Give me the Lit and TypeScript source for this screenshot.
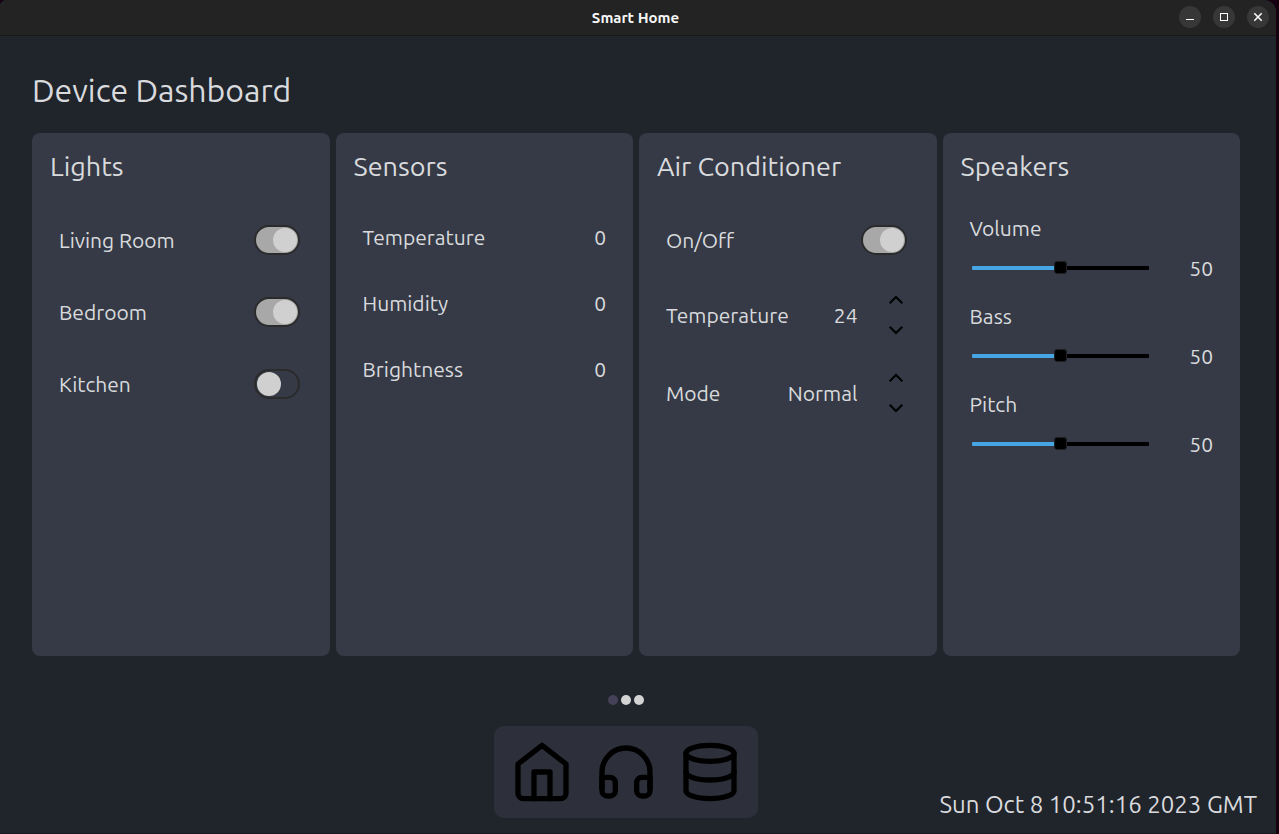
import { LitElement, html, svg, css } from "lit";
import { customElement, property, state } from "lit/decorators.js";

const ICONS = {
  home: svg`<path d="M3 9l9-7 9 7v11a2 2 0 0 1-2 2H5a2 2 0 0 1-2-2z"/><polyline points="9 22 9 12 15 12 15 22"/>`,
  headphones: svg`<path d="M3 18v-6a9 9 0 0 1 18 0v6"/><path d="M21 19a2 2 0 0 1-2 2h-1a2 2 0 0 1-2-2v-3a2 2 0 0 1 2-2h3zM3 19a2 2 0 0 0 2 2h1a2 2 0 0 0 2-2v-3a2 2 0 0 0-2-2H3z"/>`,
  database: svg`<ellipse cx="12" cy="5" rx="9" ry="3"/><path d="M21 12c0 1.66-4 3-9 3s-9-1.34-9-3"/><path d="M3 5v14c0 1.66 4 3 9 3s9-1.34 9-3V5"/>`,
};

@customElement("device-card")
class DeviceCard extends LitElement {
  @property() heading = "";

  static styles = css`
    :host {
      display: block;
      background: #353a46;
      border-radius: 8px;
      padding: 14px 18px;
    }
    .heading {
      margin: 0 0 19px;
      font-size: 27px;
      font-weight: 400;
      line-height: 38px;
      white-space: nowrap;
    }
    .body {
      padding: 0 9px;
    }
  `;

  render() {
    return html`<h2 class="heading">${this.heading}</h2>
      <div class="body"><slot></slot></div>`;
  }
}

@customElement("toggle-row")
class ToggleRow extends LitElement {
  @property() label = "";
  @property({ type: Boolean }) on = false;

  static styles = css`
    .row {
      display: flex;
      align-items: center;
      justify-content: space-between;
      height: 72px;
    }
    .switch {
      appearance: none;
      box-sizing: border-box;
      display: flex;
      align-items: center;
      width: 46px;
      height: 30px;
      margin: 0 3px 0 0;
      padding: 0 1px;
      border: 2px solid #2b2b2b;
      border-radius: 15px;
      background: transparent;
    }
    .switch::before {
      content: "";
      width: 24px;
      height: 24px;
      border-radius: 50%;
      background: #d0d0d0;
    }
    .switch:checked {
      justify-content: flex-end;
      background: #a8a8a8;
    }
  `;

  render() {
    return html`<label class="row">
      <span>${this.label}</span>
      <input
        class="switch"
        type="checkbox"
        role="switch"
        .checked=${this.on}
        @change=${(e: Event) => (this.on = (e.target as HTMLInputElement).checked)}
      />
    </label>`;
  }
}

@customElement("sensor-row")
class SensorRow extends LitElement {
  @property() label = "";
  @property({ type: Number }) value = 0;

  static styles = css`
    .row {
      display: flex;
      align-items: center;
      justify-content: space-between;
      height: 66px;
    }
  `;

  render() {
    return html`<div class="row"><span>${this.label}</span><output>${this.value}</output></div>`;
  }
}

@customElement("stepper-row")
class StepperRow extends LitElement {
  @property() label = "";
  @property({ type: Array }) options: string[] = [];
  @property({ type: Number }) index = 0;

  static styles = css`
    .row {
      display: flex;
      align-items: center;
      height: 78px;
    }
    .value {
      margin-left: auto;
      margin-right: 24px;
    }
    .stepper {
      display: flex;
      flex-direction: column;
    }
    .step {
      display: grid;
      place-items: center;
      width: 28px;
      height: 30px;
      padding: 0;
      border: 0;
      background: none;
      color: #000;
    }
    .chevron {
      width: 16px;
      height: 10px;
      fill: none;
      stroke: currentColor;
      stroke-width: 2;
    }
  `;

  private move(by: number) {
    this.index = Math.min(this.options.length - 1, Math.max(0, this.index + by));
  }

  render() {
    return html`<div class="row">
      <span>${this.label}</span>
      <output class="value">${this.options[this.index]}</output>
      <div class="stepper">
        <button class="step" aria-label="${this.label} up" @click=${() => this.move(1)}>
          <svg class="chevron" viewBox="0 0 16 10"><path d="M1.7 8.3L8 2l6.3 6.3" /></svg>
        </button>
        <button class="step" aria-label="${this.label} down" @click=${() => this.move(-1)}>
          <svg class="chevron" viewBox="0 0 16 10"><path d="M1.7 1.7L8 8l6.3-6.3" /></svg>
        </button>
      </div>
    </div>`;
  }
}

@customElement("slider-row")
class SliderRow extends LitElement {
  @property() label = "";
  @property({ type: Number }) value = 50;

  static styles = css`
    .group {
      padding: 10px 0;
    }
    .label {
      display: block;
      line-height: 28px;
      margin-bottom: 12px;
    }
    .row {
      display: flex;
      align-items: center;
      line-height: 28px;
    }
    .slider {
      appearance: none;
      flex: 1;
      min-width: 0;
      height: 13px;
      margin: 0 0 0 2px;
      background: none;
    }
    .slider::-webkit-slider-runnable-track {
      height: 4px;
      border-radius: 1px;
      background: linear-gradient(to right, #46a5e5 var(--fill), #000 var(--fill));
    }
    .slider::-webkit-slider-thumb {
      appearance: none;
      box-sizing: border-box;
      width: 13px;
      height: 13px;
      margin-top: -5px;
      border: 1px solid #1d1f23;
      border-radius: 3px;
      background: #000;
    }
    .value {
      width: 64px;
      text-align: right;
    }
  `;

  render() {
    return html`<div class="group">
      <label class="label" for="level">${this.label}</label>
      <div class="row">
        <input
          id="level"
          class="slider"
          type="range"
          min="0"
          max="100"
          style="--fill: ${this.value}%"
          .value=${String(this.value)}
          @input=${(e: Event) => (this.value = Number((e.target as HTMLInputElement).value))}
        />
        <output class="value" for="level">${this.value}</output>
      </div>
    </div>`;
  }
}

@customElement("app-root")
class AppRoot extends LitElement {
  @state() private page = 0;

  static styles = css`
    :host {
      display: block;
      box-sizing: border-box;
      min-height: 100vh;
      padding-right: 3px;
      background: #16000f;
      color: #d9dadd;
      font: 21px "Ubuntu", "Noto Sans", sans-serif;
    }
    .window {
      display: flex;
      flex-direction: column;
      box-sizing: border-box;
      min-height: 100vh;
      border-bottom: 1px solid #17191d;
      border-radius: 6px 12px 0 0;
      background: #20242b;
      overflow: hidden;
    }
    .titlebar {
      display: grid;
      grid-template-columns: 1fr auto 1fr;
      align-items: center;
      box-sizing: border-box;
      height: 36px;
      padding: 0 7px 2px;
      border-bottom: 1px solid #181818;
      background: #232323;
    }
    .app-name {
      grid-column: 2;
      margin: 0;
      padding: 2px 5px 0 0;
      color: #f7f7f7;
      font-size: 15px;
      font-weight: 700;
      line-height: 20px;
    }
    .controls {
      display: flex;
      justify-content: flex-end;
      gap: 12px;
    }
    .control {
      width: 22px;
      height: 22px;
      padding: 0;
      border: 0;
      border-radius: 50%;
      background: #373737;
      color: #fff;
    }
    .control svg {
      display: block;
      width: 22px;
      height: 22px;
      fill: none;
      stroke: currentColor;
    }
    .main {
      display: flex;
      flex-direction: column;
      flex: 1;
      padding: 34px 36px 0 32px;
    }
    .title {
      margin: 0 0 23px;
      font-size: 32px;
      font-weight: 400;
      line-height: 40px;
    }
    .cards {
      display: grid;
      grid-template-columns: repeat(4, minmax(0, 1fr));
      gap: 6px;
      flex: 1;
    }
    .footer {
      display: grid;
      grid-template-columns: 1fr auto 1fr;
      align-items: end;
      padding: 39px 19px 15px 0;
    }
    .nav {
      grid-column: 2;
      display: flex;
      flex-direction: column;
      align-items: center;
      gap: 21px;
      margin-right: 5px;
    }
    .pages {
      display: flex;
      gap: 3px;
    }
    .page {
      width: 10px;
      height: 10px;
      padding: 0;
      border: 0;
      border-radius: 50%;
      background: #d3d3d3;
    }
    .page.current {
      background: #454158;
    }
    .dock {
      display: flex;
      gap: 20px;
      padding: 14px 16px;
      border-radius: 10px;
      background: #2d303a;
    }
    .dock-item {
      padding: 0;
      border: 0;
      background: none;
      color: #000;
    }
    .dock-item svg {
      display: block;
      width: 64px;
      height: 64px;
      fill: none;
      stroke: currentColor;
      stroke-width: 2;
      stroke-linecap: round;
      stroke-linejoin: round;
    }
    .clock {
      justify-self: end;
      font-size: 24px;
      line-height: 26px;
      white-space: nowrap;
    }
  `;

  private dockItem(name: string, icon: unknown) {
    return html`<button class="dock-item" aria-label=${name}>
      <svg viewBox="0 0 24 24">${icon}</svg>
    </button>`;
  }

  render() {
    return html`<div class="window">
      <header class="titlebar">
        <p class="app-name">Smart Home</p>
        <div class="controls">
          <button class="control" aria-label="Minimize">
            <svg viewBox="0 0 22 22"><path d="M7 13.5h8" /></svg>
          </button>
          <button class="control" aria-label="Maximize">
            <svg viewBox="0 0 22 22"><rect x="7.5" y="7.5" width="7" height="7" /></svg>
          </button>
          <button class="control" aria-label="Close">
            <svg viewBox="0 0 22 22"><path d="M7.3 7.3l7.4 7.4M14.7 7.3l-7.4 7.4" stroke-width="1.5" /></svg>
          </button>
        </div>
      </header>
      <main class="main">
        <h1 class="title">Device Dashboard</h1>
        <div class="cards">
          <device-card heading="Lights">
            <toggle-row label="Living Room" on></toggle-row>
            <toggle-row label="Bedroom" on></toggle-row>
            <toggle-row label="Kitchen"></toggle-row>
          </device-card>
          <device-card heading="Sensors">
            <sensor-row label="Temperature"></sensor-row>
            <sensor-row label="Humidity"></sensor-row>
            <sensor-row label="Brightness"></sensor-row>
          </device-card>
          <device-card heading="Air Conditioner">
            <toggle-row label="On/Off" on></toggle-row>
            <stepper-row label="Temperature" .options=${["22", "23", "24", "25", "26"]} .index=${2}></stepper-row>
            <stepper-row label="Mode" .options=${["Normal", "Eco", "Turbo"]}></stepper-row>
          </device-card>
          <device-card heading="Speakers">
            <slider-row label="Volume"></slider-row>
            <slider-row label="Bass"></slider-row>
            <slider-row label="Pitch"></slider-row>
          </device-card>
        </div>
      </main>
      <footer class="footer">
        <nav class="nav">
          <div class="pages">
            ${[0, 1, 2].map(
              (i) => html`<button
                class="page ${i === this.page ? "current" : ""}"
                aria-label="Page ${i + 1}"
                @click=${() => (this.page = i)}
              ></button>`
            )}
          </div>
          <div class="dock">
            ${this.dockItem("Home", ICONS.home)} ${this.dockItem("Audio", ICONS.headphones)}
            ${this.dockItem("Storage", ICONS.database)}
          </div>
        </nav>
        <time class="clock" datetime="2023-10-08T10:51:16Z">Sun Oct 8 10:51:16 2023 GMT</time>
      </footer>
    </div>`;
  }
}
